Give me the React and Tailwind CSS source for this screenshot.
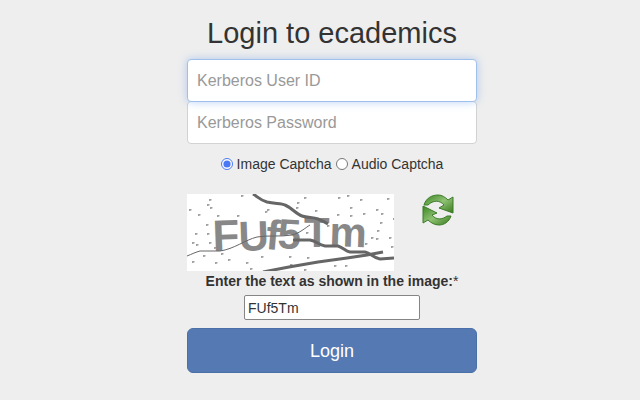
import { useState } from "react";

// Speckles scattered over the captcha
const dots = [
  [54, 1], [22, 5], [20, 10], [23, 13], [2, 15], [11, 20], [30, 21], [19, 30], [50, 21],
  [8, 39], [20, 39], [5, 48], [9, 50], [22, 48], [34, 59], [27, 53], [41, 65],
  [16, 61], [59, 68], [74, 62], [5, 67], [63, 74], [28, 68], [78, 17], [80, 15],
  [117, 3], [151, 3], [160, 1], [173, 5], [200, 4], [110, 8], [109, 13], [128, 16],
  [163, 13], [150, 20], [163, 21], [176, 19], [189, 15], [194, 19], [206, 24],
  [193, 28], [190, 36], [178, 49], [184, 43], [189, 44], [202, 43], [204, 52],
  [119, 38], [140, 31], [102, 62], [147, 71], [158, 71], [120, 63], [103, 70], [117, 75],
];

function CaptchaImage() {
  return (
    <svg width="207" height="77" viewBox="0 0 207 77" className="bg-white">
      <g fill="#a0a0a0">
        {dots.map(([x, y], i) => (
          <path key={i} d={`M${x} ${y}h2l1 1-2 1h-1z`} />
        ))}
      </g>
      <text
        x="26 52 78 90 117 142"
        y="57 57 55 54 53 52"
        rotate="-2 -2 5 3 0 2"
        fontSize="42"
        fontFamily="Liberation Sans, Arial, sans-serif"
        fontWeight="bold"
        fill="#888"
      >
        <tspan fontSize="44">F</tspan>Uf5Tm
      </text>
      <g fill="none" stroke="#666">
        <path strokeWidth="3" d="M66 0C71 3 73 6 80 8C88 10 94 9 98 11C105 14 109 20 115 22C121 24 126 23 131 25C136 27 138 28 141 30" />
        <path strokeWidth="3" d="M106 46H123C130 47 131 51 138 52H151C157 54 158 57 163 58H178C184 59 186 64 193 65L207 64" />
        <path strokeWidth="3" d="M76 78L102 73L131 68L160 64L180 61L196 58" />
        <path strokeWidth="1" d="M0 62C5 60 9 58 13 57H33C47 55 58 46 70 43C80 41 94 43 105 41C113 39 118 34 123 31" />
      </g>
    </svg>
  );
}

function RefreshIcon() {
  return (
    <svg width="34" height="33" viewBox="0 0 34 33">
      <defs>
        <linearGradient id="green" x1="0" y1="0" x2="1" y2="1">
          <stop offset="0" stopColor="#3c8523" />
          <stop offset="0.5" stopColor="#8fc274" />
          <stop offset="1" stopColor="#397a1d" />
        </linearGradient>
      </defs>
      <g fill="url(#green)" stroke="#3d7b29" strokeWidth="1" strokeLinejoin="round">
        <path d="M2 11C4 4 10 1 16 1C20 1 23 3 26 6L31 3V19L17 14L22 11C18 6 11 6 6 11Z" />
        <path d="M29 22C27 28 22 31 17 31C13 31 9 29 6 26L1 29V12L15 19L10 21C14 26 20 26 25 22Z" />
      </g>
    </svg>
  );
}

export default function App() {
  const [userId, setUserId] = useState("");
  const [password, setPassword] = useState("");
  const [captchaType, setCaptchaType] = useState("image");
  const [captcha, setCaptcha] = useState("FUf5Tm");

  return (
    <div className="min-h-screen bg-[#eeeeee] pl-6 font-['Liberation_Sans',Arial,sans-serif] text-sm text-[#333333]">
      <form className="mx-auto flex max-w-[290px] flex-col pt-[15px]" onSubmit={(e) => e.preventDefault()}>
        <h1 className="mb-2 text-center text-[29px] leading-9 whitespace-nowrap">Login to ecademics</h1>

        <input
          type="text"
          aria-label="Kerberos User ID"
          placeholder="Kerberos User ID"
          value={userId}
          onChange={(e) => setUserId(e.target.value)}
          className="relative h-[43px] rounded border border-[#9fc0ec] bg-white px-[9px] text-base shadow-[0_0_8px_rgba(102,155,233,0.45)] outline-none placeholder:text-[#999999]"
        />
        <input
          type="password"
          aria-label="Kerberos Password"
          placeholder="Kerberos Password"
          value={password}
          onChange={(e) => setPassword(e.target.value)}
          className="-mt-px h-[43px] rounded border border-[#d2d2d2] bg-white px-[9px] text-base outline-none placeholder:text-[#999999]"
        />

        {/* Captcha type */}
        <div className="mt-[10px] flex items-center justify-center gap-1 leading-5">
          <input
            id="image-captcha"
            type="radio"
            name="captchaType"
            checked={captchaType === "image"}
            onChange={() => setCaptchaType("image")}
            className="size-3 accent-[#4a78f5]"
          />
          <label htmlFor="image-captcha">Image Captcha</label>
          <input
            id="audio-captcha"
            type="radio"
            name="captchaType"
            checked={captchaType === "audio"}
            onChange={() => setCaptchaType("audio")}
            className="size-3"
          />
          <label htmlFor="audio-captcha">Audio Captcha</label>
        </div>

        <div className="mt-5 flex items-start gap-7">
          <CaptchaImage />
          <button type="button" aria-label="Refresh captcha">
            <RefreshIcon />
          </button>
        </div>

        <label htmlFor="captcha" className="text-center leading-5 font-bold">
          Enter the text as shown in the image:<span className="font-normal">*</span>
        </label>
        <input
          id="captcha"
          type="text"
          value={captcha}
          onChange={(e) => setCaptcha(e.target.value)}
          className="mt-1 h-[25px] w-44 self-center rounded-xs border border-[#858585] bg-white px-[3px] outline-none"
        />

        <button
          type="submit"
          className="mt-2 h-[45px] rounded-md border border-[#4a70a8] bg-[#5479b3] text-lg text-white"
        >
          Login
        </button>
      </form>
    </div>
  );
}
